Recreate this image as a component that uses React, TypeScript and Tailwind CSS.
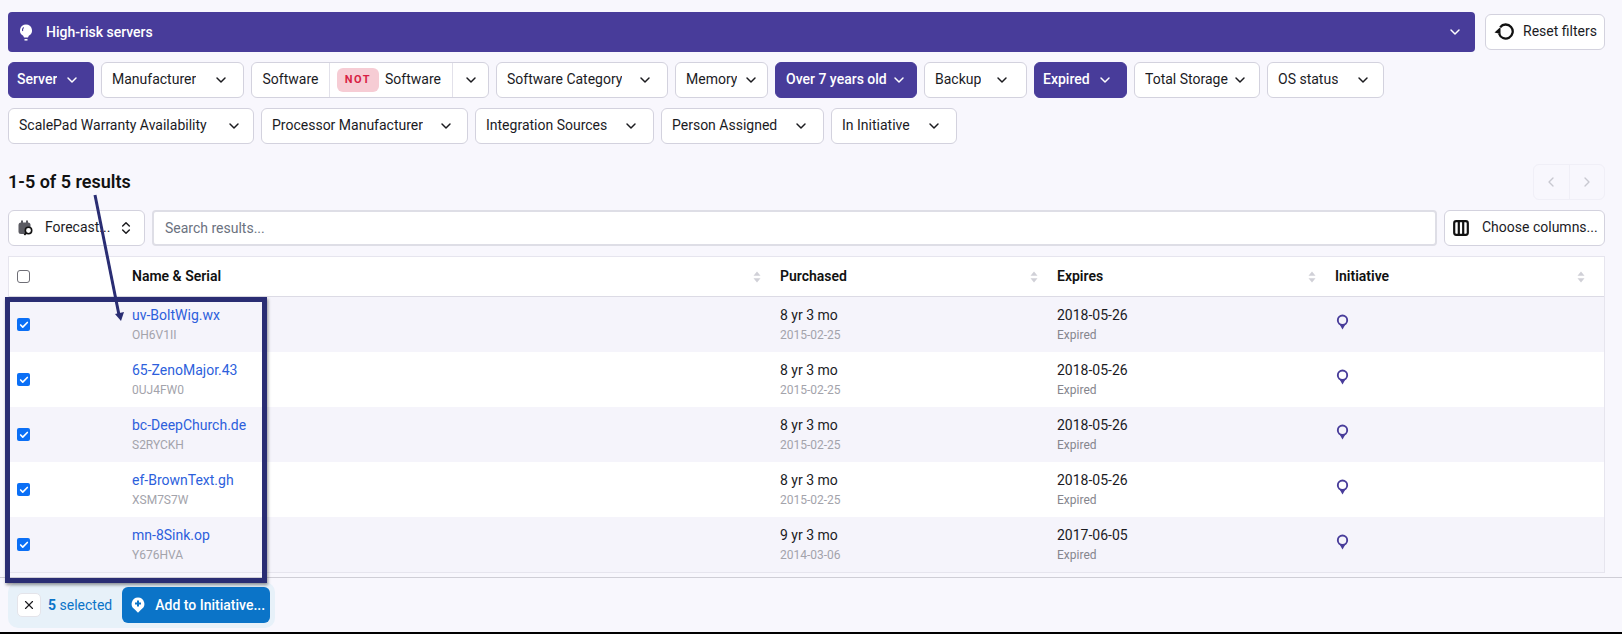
import { ChevronDown, ChevronLeft, ChevronRight, ChevronsUpDown, X, Check } from "lucide-react";

const purple = "bg-[#483c9a]";

function PinIcon({ className = "" }: { className?: string }) {
    return (
        <svg viewBox="0 0 16 20" className={className} fill="none">
            <circle cx="8" cy="7.5" r="5" stroke="currentColor" strokeWidth="2" />
            <path d="M5 12h6L8 17.5z" fill="currentColor" />
        </svg>
    );
}

function PlusPin({ className = "" }: { className?: string }) {
    return (
        <svg viewBox="0 0 14 16" className={className}>
            <path d="M7 0.5a6.4 6.4 0 0 1 3.2 11.9L7 15.8l-3.2-3.4A6.4 6.4 0 0 1 7 0.5z" fill="currentColor" />
            <path d="M7 3.6v6M4 6.6h6" stroke="#0b74c8" strokeWidth="2" />
        </svg>
    );
}

function SortIcon() {
    return (
        <svg viewBox="0 0 8 12" className="h-[12px] w-[8px] text-[#d0d0d7]" fill="currentColor">
            <path d="M4 0.5L7.5 4.8H0.5z" />
            <path d="M4 11.5L0.5 7.2H7.5z" />
        </svg>
    );
}

function Filter({ label, size, active }: { label: string; size: string; active?: boolean }) {
    return (
        <button
            className={`flex h-9 shrink-0 items-center justify-between rounded-md border text-[14px] ${size} ${
                active ? `${purple} border-[#483c9a] font-medium text-white` : "border-[#d3d2de] bg-white pl-[10px] text-[#1b1b1f]"
            }`}
        >
            <span className="-mt-px truncate">{label}</span>
            <ChevronDown className="h-4 w-4 shrink-0" strokeWidth={2.2} />
        </button>
    );
}

const rows = [
    { name: "uv-BoltWig.wx", serial: "OH6V1II", age: "8 yr 3 mo", bought: "2015-02-25", expires: "2018-05-26" },
    { name: "65-ZenoMajor.43", serial: "0UJ4FW0", age: "8 yr 3 mo", bought: "2015-02-25", expires: "2018-05-26" },
    { name: "bc-DeepChurch.de", serial: "S2RYCKH", age: "8 yr 3 mo", bought: "2015-02-25", expires: "2018-05-26" },
    { name: "ef-BrownText.gh", serial: "XSM7S7W", age: "8 yr 3 mo", bought: "2015-02-25", expires: "2018-05-26" },
    { name: "mn-8Sink.op", serial: "Y676HVA", age: "9 yr 3 mo", bought: "2014-03-06", expires: "2017-06-05" },
];

const tableCols = "grid grid-cols-[123px_648px_277px_278px_1fr] items-center";

function SortHead({ label }: { label: string }) {
    return (
        <div className="flex items-center justify-between pr-[19px]">
            <span className="text-[14px] font-semibold text-[#111]">{label}</span>
            <SortIcon />
        </div>
    );
}

export default function App() {
    return (
        <div className="relative flex h-[634px] w-[1622px] flex-col overflow-hidden bg-[#f8f7fd] font-['Roboto',sans-serif] text-[#1b1b1f]">
            <div className="flex-1 pl-2 pr-[17px] pt-3">
                {/* saved view bar */}
                <div className="flex items-center gap-[10px]">
                    <div className={`flex h-10 flex-1 items-center justify-between rounded-[4px] ${purple} pl-[11px] pr-3 text-white`}>
                        <div className="flex items-center gap-[13px]">
                            <BulbIcon />
                            <span className="text-[14px] font-medium">High-risk servers</span>
                        </div>
                        <ChevronDown className="h-4 w-4" strokeWidth={2.2} />
                    </div>
                    <button className="flex h-9 w-[120px] items-center gap-[9px] rounded-md border border-[#d3d2de] bg-white pl-2 text-[14px]">
                        <ResetIcon />
                        <span className="-mt-px">Reset filters</span>
                    </button>
                </div>

                {/* filters */}
                <div className="mt-[10px] flex w-[1400px] flex-wrap gap-x-[7px] gap-y-[10px]">
                    <Filter label="Server" size="w-[86px] pl-2 pr-[13px]" active />
                    <Filter label="Manufacturer" size="w-[143px] pr-[14px]" />
                    <div className="flex h-9 w-[238px] shrink-0 items-center rounded-md border border-[#d3d2de] bg-white text-[14px]">
                        <span className="flex h-full w-[78px] items-center justify-center border-r border-[#e2e1ea] pb-px">Software</span>
                        <span className="ml-[7px] flex h-6 w-[42px] items-center justify-center rounded-md bg-[#f6ccd4] text-[11px] font-bold tracking-[1.5px] text-[#d81f45]">
                            NOT
                        </span>
                        <span className="-mt-px ml-[6px] flex-1">Software</span>
                        <span className="flex h-full w-[36px] items-center justify-center border-l border-[#e2e1ea]">
                            <ChevronDown className="h-4 w-4" strokeWidth={2.2} />
                        </span>
                    </div>
                    <Filter label="Software Category" size="w-[172px] pr-[14px]" />
                    <Filter label="Memory" size="w-[93px] pr-[8px]" />
                    <Filter label="Over 7 years old" size="w-[142px] pl-[10px] pr-[9px]" active />
                    <Filter label="Backup" size="w-[103px] pr-[16px]" />
                    <Filter label="Expired" size="w-[93px] pl-2 pr-[13px]" active />
                    <Filter label="Total Storage" size="w-[126px] pr-[11px]" />
                    <Filter label="OS status" size="w-[117px] pr-[12px]" />
                    <Filter label="ScalePad Warranty Availability" size="w-[246px] pr-[11px]" />
                    <Filter label="Processor Manufacturer" size="w-[207px] pr-[13px]" />
                    <Filter label="Integration Sources" size="w-[179px] pr-[14px]" />
                    <Filter label="Person Assigned" size="w-[163px] pr-[14px]" />
                    <Filter label="In Initiative" size="w-[126px] pr-[14px]" />
                </div>

                {/* results heading and pager */}
                <div className="mt-5 flex h-9 items-center justify-between">
                    <h2 className="-mt-[2px] text-[18px] font-semibold text-[#111]">1-5 of 5 results</h2>
                    <div className="flex h-9 w-[72px] rounded-md border border-[#f0eff7] text-[#c8c8d0]">
                        <span className="flex flex-1 items-center justify-center border-r border-[#f0eff7]">
                            <ChevronLeft className="h-4 w-4" />
                        </span>
                        <span className="flex flex-1 items-center justify-center">
                            <ChevronRight className="h-4 w-4" />
                        </span>
                    </div>
                </div>

                {/* toolbar */}
                <div className="mt-[10px] flex h-9 gap-[7px]">
                    <button className="flex w-[137px] items-center rounded-md border border-[#d3d2de] bg-white pl-[9px] pr-[10px] text-[14px]">
                        <CalendarSearch />
                        <span className="-mt-px ml-[11px] flex-1 text-left">Forecast...</span>
                        <ChevronsUpDown className="h-4 w-4" strokeWidth={2.2} />
                    </button>
                    <div className="flex flex-1 items-center rounded-[4px] border-2 border-[#dedee6] bg-white pl-[11px] text-[14px] text-[#6b7280]">
                        Search results...
                    </div>
                    <button className="flex w-[161px] items-center gap-[13px] rounded-md border border-[#d3d2de] bg-white pl-[8px] text-[14px]">
                        <ColumnsIcon />
                        <span className="-mt-px">Choose columns...</span>
                    </button>
                </div>

                {/* table */}
                <div className="mt-[10px] border border-[#e6e5ee] bg-white">
                    <div className={`${tableCols} h-[40px] border-b border-[#dcdbe5]`}>
                        <span className="ml-2 block h-[13px] w-[13px] rounded-[3px] border border-[#6e6e76] bg-white" />
                        <SortHead label="Name & Serial" />
                        <SortHead label="Purchased" />
                        <SortHead label="Expires" />
                        <SortHead label="Initiative" />
                    </div>
                    {rows.map((r, i) => (
                        <div key={r.name} className={`${tableCols} h-[55px] ${i % 2 === 0 ? "bg-[#f5f4fb]" : "bg-white"}`}>
                            <span className="ml-2 flex h-[13px] w-[13px] items-center justify-center rounded-[2px] bg-[#0b6ff5] text-white">
                                <Check className="h-[10px] w-[10px]" strokeWidth={4} />
                            </span>
                            <div className="-mt-px">
                                <div className="text-[14px] leading-[20px] text-[#2d5fdc]">{r.name}</div>
                                <div className="mt-[3px] text-[12px] leading-[15px] text-[#a3a3ab]">{r.serial}</div>
                            </div>
                            <div className="-mt-px">
                                <div className="text-[14px] leading-[20px]">{r.age}</div>
                                <div className="mt-[3px] text-[12px] leading-[15px] text-[#a3a3ab]">{r.bought}</div>
                            </div>
                            <div className="-mt-px">
                                <div className="text-[14px] leading-[20px]">{r.expires}</div>
                                <div className="mt-[3px] text-[12px] leading-[15px] text-[#85858d]">Expired</div>
                            </div>
                            <PinIcon className="-mt-[5px] h-[19px] w-[15px] text-[#483c9a]" />
                        </div>
                    ))}
                </div>
            </div>

            {/* selection footer */}
            <div className="flex h-[55px] shrink-0 items-start border-t border-[#cfced6] pl-2 pt-[4px]">
                <div className="flex h-[46px] w-[267px] items-center rounded-[10px] bg-[#e7f1f9] pl-[9px] pr-[5px]">
                    <button className="flex h-[24px] w-[24px] shrink-0 items-center justify-center rounded-[5px] border border-[#e4e4ea] bg-white">
                        <X className="h-[14px] w-[14px]" strokeWidth={2} />
                    </button>
                    <span className="ml-[7px] whitespace-nowrap text-[14px] text-[#0b74c8]">
                        <b className="font-bold">5</b> selected
                    </span>
                    <button className="ml-[10px] flex h-9 flex-1 items-center gap-[10px] whitespace-nowrap rounded-md bg-[#0b74c8] pl-[9px] text-[14px] font-medium text-white">
                        <PlusPin className="h-[16px] w-[14px] shrink-0 text-white" />
                        Add to Initiative...
                    </button>
                </div>
            </div>
            <div className="h-[2px] shrink-0 bg-black" />

            {/* annotation over the screenshot */}
            <div className="absolute left-[5px] top-[297px] h-[286px] w-[262px] border-[5px] border-[#2a2d73] shadow-[1px_2px_3px_rgba(0,0,0,0.4)]" />
            <svg className="absolute left-[85px] top-[190px] h-[140px] w-[50px]" viewBox="0 0 50 140" fill="none">
                <path d="M10 5 L34 125" stroke="#2a2d73" strokeWidth="3" />
                <path d="M36 131 L39 122 L30 124 Z" fill="#2a2d73" />
            </svg>
        </div>
    );
}

function BulbIcon() {
    return (
        <svg viewBox="0 0 14 17" className="h-[17px] w-[14px]">
            <path d="M7 0.5a6 6 0 0 1 2.8 11.3L9 13.5H5l-0.8-1.7A6 6 0 0 1 7 0.5z" fill="#fff" />
            <path d="M4.6 3.4A3.8 3.8 0 0 0 3.6 7" stroke="#483c9a" strokeWidth="1.2" fill="none" />
            <path d="M5.5 15.8h3" stroke="#fff" strokeWidth="1.5" />
        </svg>
    );
}

function ResetIcon() {
    return (
        <svg viewBox="0 0 20 20" className="h-[20px] w-[20px]" fill="none">
            <path d="M6.2 5.2A7 7 0 1 1 5 11.5" stroke="#111" strokeWidth="2.3" />
            <path d="M0.5 10.5L6.5 5V12z" fill="#111" />
        </svg>
    );
}

function ColumnsIcon() {
    return (
        <svg viewBox="0 0 16 16" className="h-[16px] w-[16px]" fill="none" stroke="#111" strokeWidth="2.2">
            <rect x="1.2" y="1.2" width="13.6" height="13.6" rx="2" />
            <path d="M5.8 1.5v13M10.2 1.5v13" />
        </svg>
    );
}

function CalendarSearch() {
    return (
        <svg viewBox="0 0 16 16" className="h-[16px] w-[16px]">
            <rect x="0.5" y="2.5" width="12" height="11.5" rx="2.5" fill="#5b5b62" />
            <path d="M4 0.5v3M9 0.5v3" stroke="#5b5b62" strokeWidth="2" />
            <circle cx="10.5" cy="10.5" r="3.2" fill="#fff" stroke="#111" strokeWidth="1.6" />
            <path d="M8 13.2L6.4 15" stroke="#111" strokeWidth="1.8" />
        </svg>
    );
}
